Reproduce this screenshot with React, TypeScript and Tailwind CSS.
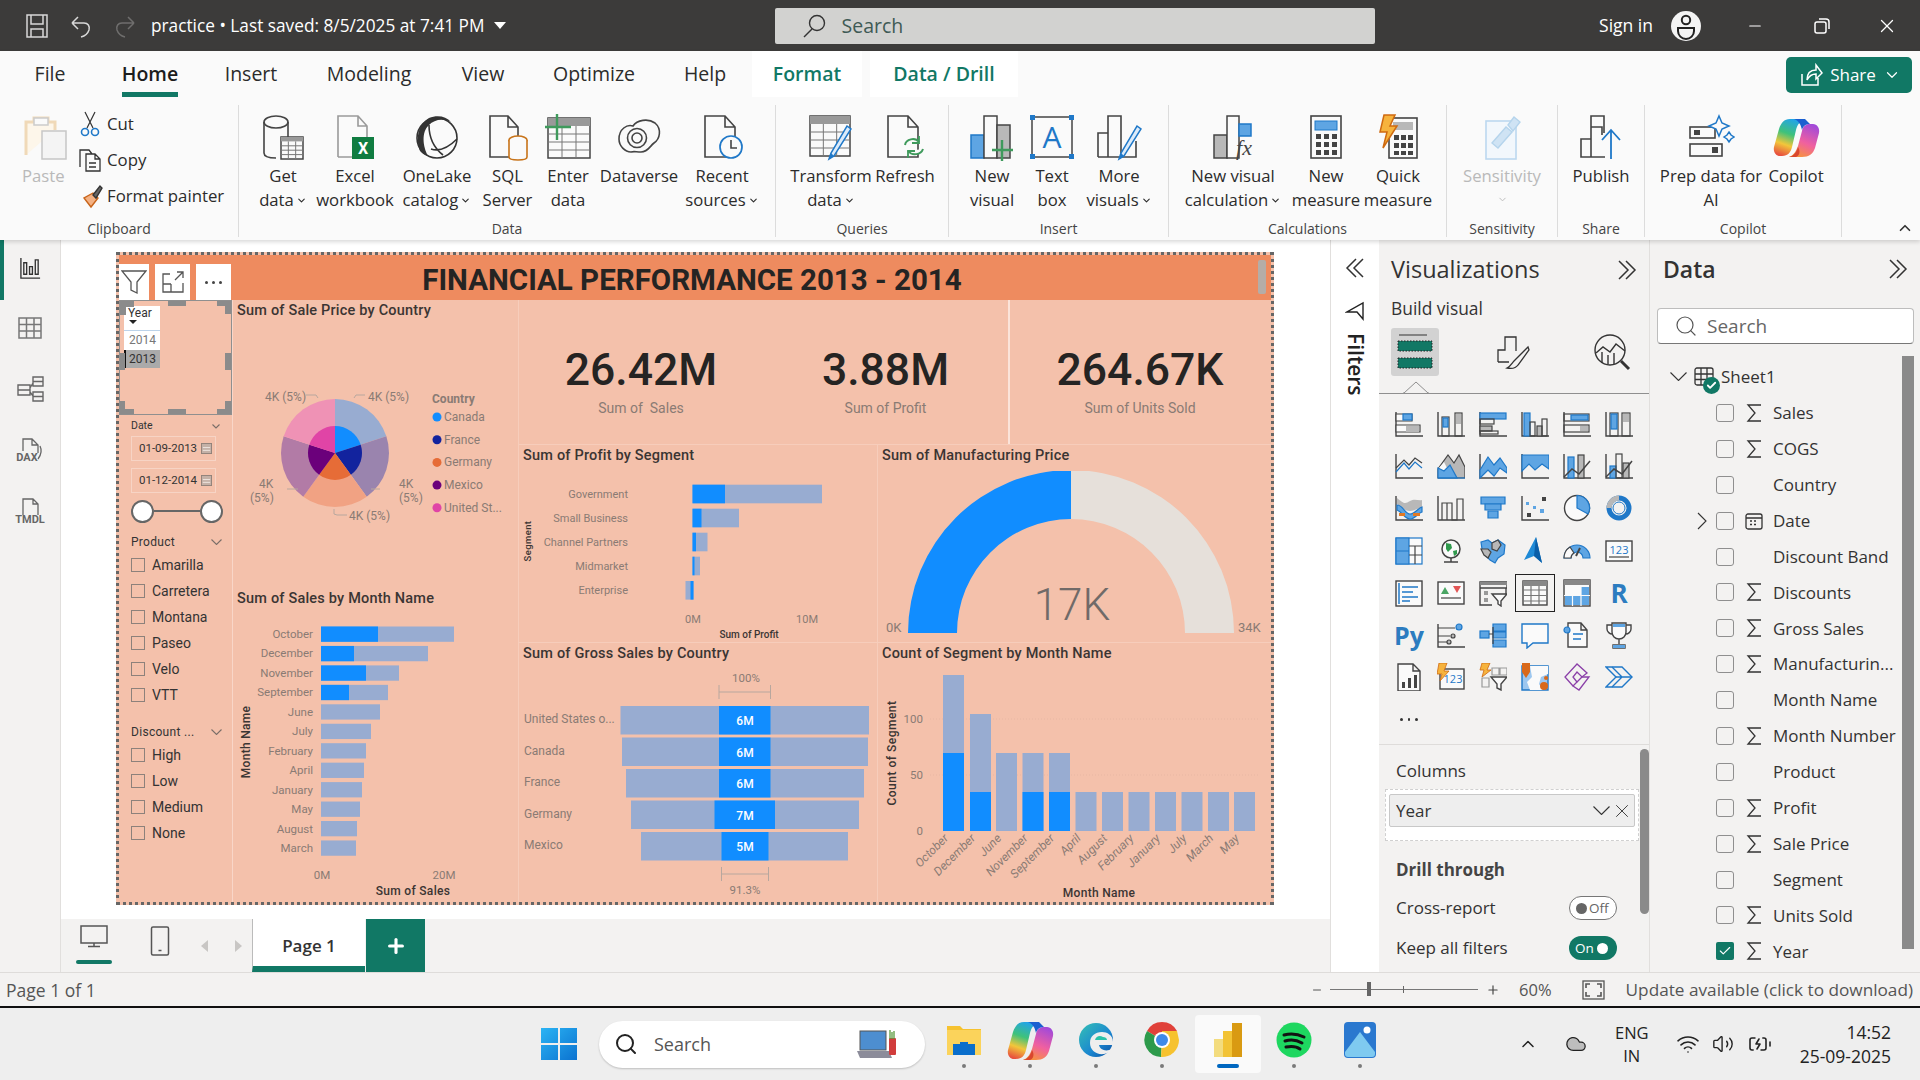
import { ReactNode } from "react";
import { ChevronDown, ChevronUp, Search, X, Minus, Plus, Check, Wifi, Volume2, BatteryCharging, Cloud } from "lucide-react";

const K = "#444444";
const BL = "#5ea5e3";
const BS = "#1f78c8";
const GY = "#b8b8b8";

function Ico({ s = 48, vb = 48, children }: { s?: number; vb?: number; children: ReactNode }) {
  return (
    <svg width={s} height={s} viewBox={`0 0 ${vb} ${vb}`} fill="none" className="shrink-0">
      {children}
    </svg>
  );
}

const Doc = ({ x = 8, w = 28, c = K }: { x?: number; w?: number; c?: string }) => (
  <path d={`M${x} 44V3h${w - 10}l10 11v30z M${x + w - 10} 3v11h10`} stroke={c} strokeWidth="1.6" />
);

const Grid = ({ x, y, w, h, top = "#999" }: { x: number; y: number; w: number; h: number; top?: string }) => (
  <g>
    <rect x={x} y={y} width={w} height={h} fill="#fafafa" stroke={K} strokeWidth="1.5" />
    <rect x={x} y={y} width={w} height={h / 5} fill={top} />
    <path d={`M${x} ${y + (h * 2) / 5}h${w}M${x} ${y + (h * 3) / 5}h${w}M${x} ${y + (h * 4) / 5}h${w}M${x + w / 3} ${y + h / 5}v${(h * 4) / 5}M${x + (w * 2) / 3} ${y + h / 5}v${(h * 4) / 5}`} stroke="#777" strokeWidth="1" />
  </g>
);

const Pencil = ({ dx = 0, dy = 0 }: { dx?: number; dy?: number }) => (
  <g transform={`translate(${dx} ${dy})`}>
    <path d="M14 42l-2 6 5-3 17-27-4-3z" fill="#dcebfa" stroke={BS} strokeWidth="1.5" />
    <path d="M12 48l2-6 3 3z" fill={BS} />
  </g>
);

const Lightning = () => <path d="M10 2h11l-5 11h7L9 35l4-16H6z" fill="#f6b33d" stroke="#cf6a10" strokeWidth="1.5" />;

// wide thin chevron, lucide's are too small at these sizes
function Chev({ w, c = "currentColor" }: { w: number; c?: string }) {
  return (
    <svg width={w} height={w / 2 + 1} viewBox={`0 0 ${w} ${w / 2 + 1}`} fill="none" stroke={c} strokeWidth="1.100" className="shrink-0">
      <path d={`M0.500 0.500L${w / 2} ${w / 2}L${w - 0.5} 0.500`} />
    </svg>
  );
}

function CopilotMark({ id }: { id: string }) {
  return (
    <Ico>
      <defs>
        <linearGradient id={`${id}L`} x1="0.6" y1="0" x2="0.3" y2="1">
          <stop offset="0" stopColor="#22a4e8" />
          <stop offset="0.4" stopColor="#3fc27a" />
          <stop offset="0.7" stopColor="#f2c63a" />
          <stop offset="1" stopColor="#e8523f" />
        </linearGradient>
        <linearGradient id={`${id}R`} x1="0.7" y1="0" x2="0.3" y2="1">
          <stop offset="0" stopColor="#a34ad8" />
          <stop offset="0.55" stopColor="#f060a0" />
          <stop offset="1" stopColor="#f7943c" />
        </linearGradient>
      </defs>
      <path d="M18 6h15c-5 2-8 6-9 11l-4 17c-1 5-4 9-10 9H8c-4 0-7-4-6-9l5-18C9 10 12 6 18 6z" fill={`url(#${id}L)`} />
      <path d="M30 44H17c5-2 7-6 9-11l4-15c1-5 4-7 8-7h3c4 0 7 4 6 9l-4 15c-2 6-6 9-13 9z" fill={`url(#${id}R)`} />
      <path d="M22 6h11l5 5c-4 0-7 2-8 6-1-5-3-9-8-11z" fill="#1a5fd0" />
      <path d="M26 34c-1 4-3 7-6 9l-3 1h7c3-1 5-5 2-10z" fill="#d9472f" />
    </Ico>
  );
}

function RibbonIcon({ name }: { name: string }) {
  switch (name) {
    case "get":
      return (
        <Ico>
          <ellipse cx="17" cy="9" rx="12" ry="6" stroke={K} strokeWidth="1.6" fill="#fafafa" />
          <path d="M5 9v31c0 3 4 5 12 5M29 9v15" stroke={K} strokeWidth="1.6" />
          <Grid x={22} y={24} w={22} h={22} />
        </Ico>
      );
    case "excel":
      return (
        <Ico>
          <path d="M7 44V3h20l9 10v12M27 3v10h9M7 44h14" stroke="#9a9a9a" strokeWidth="1.6" />
          <rect x="21" y="24" width="22" height="22" fill="#107c41" />
          <text x="32" y="41" textAnchor="middle" fontSize="16" fontWeight="700" fill="#fff" fontFamily="Roboto, sans-serif">X</text>
        </Ico>
      );
    case "onelake":
      return (
        <Ico>
          <circle cx="24" cy="25" r="20" stroke="#333" strokeWidth="1.6" fill="#fafafa" />
          <path d="M16 5C6 11 2 24 7 38c2 2 4 4 8 5-5-9-7-24 1-31 5-5 13-7 22-3-5-6-14-7-22-4z" fill="#333" />
          <path d="M16 12c0 12 5 23 14 30M18 36c9 3 18-2 26-10" stroke="#333" strokeWidth="1.6" />
        </Ico>
      );
    case "sql":
      return (
        <Ico>
          <Doc x={6} w={28} />
          <ellipse cx="34" cy="27" rx="9" ry="4" fill="#fafafa" stroke="#c8741a" strokeWidth="1.6" />
          <path d="M25 27v17c0 2 4 3 9 3s9-1 9-3V27" fill="#fafafa" stroke="#c8741a" strokeWidth="1.6" />
        </Ico>
      );
    case "enter":
      return (
        <Ico>
          <Grid x={4} y={5} w={42} h={40} />
          <path d="M13 1v26M1 14h26" stroke="#3f9a5c" strokeWidth="2.4" />
        </Ico>
      );
    case "dataverse":
      return (
        <Ico>
          <path d="M4 26c0-10 8-15 14-13 4-6 15-8 22-3 7 6 5 16-1 20-4 3-6 9-13 9-5 0-7-1-10 0-6 0-12-6-12-13z" stroke={K} strokeWidth="1.6" />
          <circle cx="22" cy="25" r="9.500" stroke={K} strokeWidth="1.6" />
          <circle cx="22" cy="25" r="5" stroke={K} strokeWidth="1.6" />
        </Ico>
      );
    case "recent":
      return (
        <Ico>
          <Doc x={7} w={30} />
          <circle cx="33" cy="34" r="11" fill="#fafafa" stroke={BS} strokeWidth="1.7" />
          <path d="M33 27v8h6" stroke={K} strokeWidth="1.6" />
        </Ico>
      );
    case "transform":
      return (
        <Ico>
          <Grid x={3} y={3} w={40} h={40} />
          <Pencil dx={10} dy={-2} />
        </Ico>
      );
    case "refresh":
      return (
        <Ico>
          <Doc x={7} w={30} />
          <path d="M24 32c1-6 10-8 14-3M42 36c-2 6-11 7-15 2" stroke="#3f9a5c" strokeWidth="2" fill="#fafafa" />
          <path d="M38 23v7h-7M27 45v-7h7" stroke="#3f9a5c" strokeWidth="1.8" />
        </Ico>
      );
    case "newvisual":
      return (
        <Ico>
          <rect x="3" y="22" width="13" height="23" fill={BL} stroke={BS} strokeWidth="1.5" />
          <rect x="16" y="3" width="13" height="42" fill="#fafafa" stroke={K} strokeWidth="1.5" />
          <rect x="29" y="12" width="13" height="33" fill={GY} stroke={K} strokeWidth="1.5" />
          <path d="M34 27v21M24 37h21" stroke="#3f9a5c" strokeWidth="2.4" />
        </Ico>
      );
    case "textbox":
      return (
        <Ico>
          <rect x="4" y="4" width="40" height="40" stroke={K} strokeWidth="1.5" />
          <path d="M2 2h5v5H2zM41 2h5v5h-5zM2 41h5v5H2zM41 41h5v5h-5z" fill={BS} />
          <text x="24" y="35" textAnchor="middle" fontSize="30" fill={BS} fontFamily="Open Sans, sans-serif">A</text>
        </Ico>
      );
    case "more":
      return (
        <Ico>
          <path d="M3 44V20h10M13 44V3h13v41M3 44h38V28" stroke={K} strokeWidth="1.6" />
          <Pencil dx={12} dy={-2} />
        </Ico>
      );
    case "calc":
      return (
        <Ico>
          <rect x="5" y="22" width="13" height="23" fill={GY} stroke={K} strokeWidth="1.5" />
          <rect x="18" y="3" width="12" height="42" fill="#fafafa" stroke={K} strokeWidth="1.5" />
          <rect x="30" y="11" width="12" height="12" fill={BL} stroke={BS} strokeWidth="1.5" />
          <text x="35" y="42" textAnchor="middle" fontSize="22" fontStyle="italic" fill={K} fontFamily="Liberation Serif, serif">fx</text>
        </Ico>
      );
    case "measure":
      return (
        <Ico>
          <rect x="9" y="3" width="30" height="42" fill="#fafafa" stroke={K} strokeWidth="1.6" />
          <rect x="13" y="8" width="22" height="9" fill={BL} stroke={BS} />
          <path d="M14 21h5v5h-5zM22 21h5v5h-5zM30 21h5v5h-5zM14 29h5v5h-5zM22 29h5v5h-5zM30 29h5v5h-5zM14 37h5v5h-5zM22 37h5v5h-5zM30 37h5v5h-5z" fill={K} />
        </Ico>
      );
    case "quick":
      return (
        <Ico>
          <rect x="15" y="5" width="28" height="40" fill="#fafafa" stroke={K} strokeWidth="1.6" />
          <rect x="19" y="9" width="20" height="8" fill={GY} />
          <path d="M20 22h5v5h-5zM27 22h5v5h-5zM34 22h5v5h-5zM20 30h5v5h-5zM27 30h5v5h-5zM34 30h5v5h-5zM20 38h5v4h-5zM27 38h5v4h-5zM34 38h5v4h-5z" fill={K} />
          <Lightning />
        </Ico>
      );
    case "sensitivity":
      return (
        <Ico>
          <rect x="8" y="8" width="30" height="38" fill="#f2f7fc" stroke="#bcd8ef" strokeWidth="1.6" />
          <path d="M14 30L28 14l6 5-14 16zM30 12l6-8 6 5-7 9z" fill="#cfe3f4" stroke="#b5d4ec" strokeWidth="1.4" />
        </Ico>
      );
    case "publish":
      return (
        <Ico>
          <path d="M4 44V26h10v18zM14 44V14h11v8M14 14V3h13v17M4 44h24" stroke={K} strokeWidth="1.6" />
          <path d="M34 46V18M25 27l9-10 9 10" stroke={BS} strokeWidth="1.8" />
        </Ico>
      );
    case "prep":
      return (
        <Ico>
          <rect x="3" y="14" width="25" height="11" stroke={K} strokeWidth="1.6" fill="#fafafa" />
          <rect x="7" y="17" width="6" height="5" fill={K} />
          <rect x="3" y="31" width="32" height="12" stroke={K} strokeWidth="1.6" fill="#fafafa" />
          <rect x="25" y="34" width="6" height="6" fill={K} />
          <path d="M32 3l3 7 7 3-7 3-3 7-3-7-7-3 7-3zM42 19l2 3 3 2-3 2-2 3-2-3-3-2 3-2z" fill="#fafafa" stroke={BS} strokeWidth="1.5" />
        </Ico>
      );
    case "copilot":
      return <CopilotMark id="cpR" />;
    case "paste":
      return (
        <Ico vb={48}>
          <path d="M4 42V9h8V5h14v4h7v8" stroke="#f0d9b8" strokeWidth="3" fill="#fdf6ea" />
          <path d="M12 5h14v7H12z" fill="#fafafa" stroke="#ccc" strokeWidth="1.5" />
          <rect x="20" y="18" width="24" height="28" fill="#f4f4f4" stroke="#c6c6c6" strokeWidth="1.5" />
        </Ico>
      );
  }
  return null;
}

function Big({ w, icon, lines, arrow, faded }: { w: number; icon: string; lines: string[]; arrow?: boolean; faded?: boolean }) {
  return (
    <div style={{ width: w }} className={`flex flex-col items-center pt-[8px] text-[16.7px] leading-[24px] ${faded ? "text-[#b9b9b9]" : "text-[#2b2b2b]"}`}>
      <div className="mb-[3px] flex h-[48px] items-center">
        <RibbonIcon name={icon} />
      </div>
      {lines.map((l, i) => (
        <span key={l} className="flex items-center whitespace-nowrap">
          {l}
          {arrow && i === lines.length - 1 && <ChevronDown size={11} strokeWidth={2.4} className="ml-[2px]" />}
        </span>
      ))}
      {faded && <ChevronDown size={11} strokeWidth={2} className="mt-[6px] text-[#b9b9b9]" />}
    </div>
  );
}

function Group({ w, label, className = "", children }: { w: number; label: string; className?: string; children: ReactNode }) {
  return (
    <div style={{ width: w }} className="flex h-[132px] flex-col border-r border-[#dcdcdc]">
      <div className={`flex h-[115px] shrink-0 ${className}`}>{children}</div>
      <div className="text-center text-[14px] leading-[17px] text-[#444]">{label}</div>
    </div>
  );
}

function DoubleChevron({ left }: { left?: boolean }) {
  return (
    <svg width="20" height="20" viewBox="0 0 20 20" fill="none" stroke="#333" strokeWidth="1.500" className={left ? "rotate-180" : ""}>
      <path d="M2 1l9 9-9 9M9 1l9 9-9 9" />
    </svg>
  );
}

function TitleBar() {
  return (
    <div className="flex h-[51px] items-center bg-[#3c3b3a] text-white">
      <svg width="24" height="26" viewBox="0 0 24 26" fill="none" className="ml-[25px]" stroke="#d8d8d8" strokeWidth="1.5">
        <path d="M2 2h20v22H2zM6 2v9h12V2M6 24v-8h12v8" />
      </svg>
      <svg width="22" height="24" viewBox="0 0 22 24" fill="none" className="ml-[21px]" stroke="#d8d8d8" strokeWidth="1.5">
        <path d="M2 9h12c4 0 6 3 5 7-1 3-4 6-8 7M2 9l6-6M2 9l6 6" />
      </svg>
      <svg width="22" height="24" viewBox="0 0 22 24" fill="none" className="ml-[22px]" stroke="#6f6e6d" strokeWidth="1.5">
        <path d="M20 9H8c-4 0-6 3-5 7 1 3 4 6 8 7M20 9l-6-6M20 9l-6 6" />
      </svg>
      <span className="ml-[15px] whitespace-nowrap text-[17.25px]">practice • Last saved: 8/5/2025 at 7:41 PM</span>
      <span className="ml-[9px] h-0 w-0 border-x-[6px] border-t-[7px] border-x-transparent border-t-white" />
      <div className="ml-[269px] flex h-[36px] w-[600px] items-center rounded-[2px] bg-[#d2d2d0] pl-[26px] text-[#3f5a55]">
        <svg width="26" height="26" viewBox="0 0 26 26" fill="none" stroke="#333" strokeWidth="1.4">
          <circle cx="16" cy="10" r="7.5" />
          <path d="M11 16L3 24" />
        </svg>
        <span className="ml-[15px] text-[19.5px]">Search</span>
      </div>
      <span className="ml-auto text-[17.5px]">Sign in</span>
      <svg width="32" height="32" viewBox="0 0 32 32" className="ml-[17px]">
        <circle cx="16" cy="16" r="15" fill="#f4f4f4" />
        <circle cx="16" cy="10" r="4.2" fill="none" stroke="#222" strokeWidth="2" />
        <path d="M8 18h16v3a8 8 0 0 1-16 0z" fill="none" stroke="#222" strokeWidth="2" />
      </svg>
      <Minus size={18} strokeWidth={1.5} className="ml-[44px]" />
      <svg width="18" height="18" viewBox="0 0 18 18" fill="none" stroke="#fff" strokeWidth="1.5" className="ml-[49px]">
        <rect x="2" y="5" width="11" height="11" rx="2" />
        <path d="M6 2h7a3 3 0 0 1 3 3v7" />
      </svg>
      <X size={22} strokeWidth={1.4} className="ml-[45px] mr-[22px]" />
    </div>
  );
}

function Ribbon() {
  const tabs: [string, number][] = [
    ["File", 100],
    ["Home", 100],
    ["Insert", 102],
    ["Modeling", 134],
    ["View", 94],
    ["Optimize", 128],
    ["Help", 94],
  ];
  return (
    <div className="relative z-10 h-[189px] bg-[#fafafa] shadow-[0_2px_4px_rgba(0,0,0,0.15)]">
      <div className="flex h-[54px] items-stretch text-[19.5px] text-[#2b2b2b]">
        {tabs.map(([t, w]) => (
          <div key={t} style={{ width: w }} className="flex h-[46px] items-center justify-center">
            <span className={t === "Home" ? "relative font-semibold text-[#1c1c1c]" : ""}>
              {t}
              {t === "Home" && <span className="absolute inset-x-0 -bottom-[8px] h-[5px] bg-[#117865]" />}
            </span>
          </div>
        ))}
        <div className="flex h-[46px] w-[110px] items-center justify-center bg-white font-semibold text-[#117865]">Format</div>
        <div className="ml-[8px] flex h-[46px] w-[148px] items-center justify-center bg-white font-semibold text-[#117865]">Data / Drill</div>
        <div className="ml-auto mr-[8px] mt-[6px] flex h-[36px] w-[126px] items-center justify-center gap-[7px] rounded-[5px] bg-[#117865] pl-[2px] text-[17px] text-white">
          <svg width="24" height="24" viewBox="0 0 24 24" fill="none" stroke="#fff" strokeWidth="1.5">
            <path d="M3 11v11h16v-7M8 17c0-7 4-10 9-10V2l6 8-6 6v-5c-4 0-7 2-9 6z" />
          </svg>
          Share
          <ChevronDown size={18} strokeWidth={1.6} />
        </div>
      </div>
      <div className="flex">
        <Group w={239} label="Clipboard">
          <div className="w-[77px] pl-[22px] pt-[8px] text-[#b9b9b9]">
            <div className="h-[48px]">
              <RibbonIcon name="paste" />
            </div>
            <div className="mt-[3px] text-[16.7px] leading-[24px]">Paste</div>
          </div>
          <div className="flex flex-col gap-[10px] pt-[6px] text-[16.800px] leading-[26px] text-[#2b2b2b]">
            <div className="flex items-center">
              <span className="flex w-[30px] justify-center pr-[4px]">
                <svg width="20" height="26" viewBox="0 0 20 26" fill="none" stroke="#333" strokeWidth="1.2">
                  <path d="M5 1l8 16M15 1L7 17" />
                  <circle cx="5" cy="21" r="3.5" stroke={BS} strokeWidth="1.6" />
                  <circle cx="15" cy="21" r="3.5" stroke={BS} strokeWidth="1.6" />
                </svg>
              </span>
              Cut
            </div>
            <div className="flex items-center">
              <span className="flex w-[30px] justify-center pr-[4px]">
                <svg width="24" height="26" viewBox="0 0 24 26" fill="none" stroke="#333" strokeWidth="1.3">
                  <path d="M2 20V3h9l3 4M8 24V7h9l5 5v12zM17 7v5h5M11 16h7M11 20h7" />
                </svg>
              </span>
              Copy
            </div>
            <div className="flex items-center">
              <span className="flex w-[30px] justify-center pr-[3px]">
                <svg width="26" height="26" viewBox="0 0 26 26" fill="none" strokeWidth="1.4">
                  <path d="M15 10l-9 5 7 9 7-9z" fill="#f4b183" stroke="#c8641a" />
                  <path d="M15 12l7-9 2 2-6 10z" fill="#666" stroke="#333" />
                </svg>
              </span>
              Format painter
            </div>
          </div>
        </Group>
        <Group w={537} label="Data" className="pl-[11px]">
          <Big w={66} icon="get" lines={["Get", "data"]} arrow />
          <Big w={78} icon="excel" lines={["Excel", "workbook"]} />
          <Big w={86} icon="onelake" lines={["OneLake", "catalog"]} arrow />
          <Big w={55} icon="sql" lines={["SQL", "Server"]} />
          <Big w={66} icon="enter" lines={["Enter", "data"]} />
          <Big w={76} icon="dataverse" lines={["Dataverse"]} />
          <Big w={90} icon="recent" lines={["Recent", "sources"]} arrow />
        </Group>
        <Group w={173} label="Queries" className="pl-[9px]">
          <Big w={92} icon="transform" lines={["Transform", "data"]} arrow />
          <Big w={56} icon="refresh" lines={["Refresh"]} />
        </Group>
        <Group w={220} label="Insert" className="pl-[13px]">
          <Big w={60} icon="newvisual" lines={["New", "visual"]} />
          <Big w={60} icon="textbox" lines={["Text", "box"]} />
          <Big w={74} icon="more" lines={["More", "visuals"]} arrow />
        </Group>
        <Group w={278} label="Calculations" className="pl-[6px]">
          <Big w={116} icon="calc" lines={["New visual", "calculation"]} arrow />
          <Big w={70} icon="measure" lines={["New", "measure"]} />
          <Big w={74} icon="quick" lines={["Quick", "measure"]} />
        </Group>
        <Group w={111} label="Sensitivity">
          <Big w={110} icon="sensitivity" lines={["Sensitivity"]} faded />
        </Group>
        <Group w={87} label="Share">
          <Big w={86} icon="publish" lines={["Publish"]} />
        </Group>
        <Group w={197} label="Copilot">
          <Big w={132} icon="prep" lines={["Prep data for", "AI"]} />
          <Big w={38} icon="copilot" lines={["Copilot"]} />
        </Group>
        <div className="ml-auto flex h-[132px] items-end pr-[6px]">
          <ChevronUp size={18} strokeWidth={2.2} className="text-[#333]" />
        </div>
      </div>
    </div>
  );
}

function LeftRail() {
  return (
    <div className="flex w-[61px] shrink-0 flex-col items-center border-r border-[#e1dfdd] bg-[#f3f2f1] pt-[17px]">
      <div className="absolute left-0 top-[240px] h-[60px] w-[4px] bg-[#117865]" />
      <svg width="23" height="23" viewBox="0 0 24 24" fill="none" stroke="#333" strokeWidth="1.4">
        <path d="M2 1v21h20M5 18V6h3v12zM11 18v-8h3v8zM17 18V3h3v15z" />
      </svg>
      <svg width="26" height="24" viewBox="0 0 26 24" fill="none" stroke="#777" strokeWidth="1.5" className="mt-[36px]">
        <path d="M2 2h22v20H2zM2 8.5h22M2 15h22M9.5 2v20M17 2v20" />
      </svg>
      <svg width="28" height="28" viewBox="0 0 28 28" fill="none" stroke="#666" strokeWidth="1.4" className="mt-[35px]">
        <path d="M2 10h12v10H2zM2 15h12M17 2h10v9H17zM17 6.500h10M17 17h10v9H17zM17 21.500h10M14 13l3-5M14 17l3 4" />
      </svg>
      <div className="mt-[34px] flex flex-col items-center">
        <svg width="28" height="24" viewBox="0 0 28 24" fill="none" stroke="#666" strokeWidth="1.3">
          <path d="M7 14V2h9l6 6v8M16 2v6h6M24 9c2 4 1 9-2 13" />
        </svg>
        <span className="-mt-[9px] -ml-[6px] font-['Roboto',sans-serif] text-[11px] font-bold leading-[11px] text-[#666]">DAX</span>
      </div>
      <div className="mt-[34px] flex flex-col items-center">
        <svg width="24" height="19" viewBox="0 0 24 19" fill="none" stroke="#666" strokeWidth="1.3">
          <path d="M5 18V2h10l5 5v11M15 2v5h5" />
        </svg>
        <span className="-mt-[2px] font-['Roboto',sans-serif] text-[11px] font-bold leading-[11px] text-[#666]">TMDL</span>
      </div>
    </div>
  );
}

function CheckRow({ label }: { label: string }) {
  return (
    <div className="flex h-[26px] items-center gap-[7px] text-[14px] text-[#333]">
      <span className="h-[14px] w-[14px] border border-[#8d817b]" />
      {label}
    </div>
  );
}

function DateInput({ value }: { value: string }) {
  return (
    <div className="flex h-[25px] w-[85px] items-center justify-between border border-[#f7d4c5] pl-[7px] pr-[3px] text-[11.500px] text-[#333]">
      {value}
      <svg width="11" height="11" viewBox="0 0 12 12">
        <rect x="0.500" y="0.500" width="11" height="11" fill="#c4b1a7" stroke="#8e8078" />
        <path d="M2 5h8M2 8h8" stroke="#f2e9e5" />
      </svg>
    </div>
  );
}

function Slicers() {
  const handles = [
    "left-0 top-0 h-[6px] w-[14px]", "left-0 top-0 h-[14px] w-[6px]", "left-[48px] top-0 h-[5px] w-[18px]", "right-0 top-0 h-[5px] w-[14px]", "right-0 top-0 h-[13px] w-[6px]",
    "left-0 top-[52px] h-[17px] w-[5px]", "right-0 top-[52px] h-[17px] w-[6px]",
    "left-0 bottom-0 h-[5px] w-[14px]", "left-0 bottom-0 h-[13px] w-[5px]", "left-[48px] bottom-0 h-[5px] w-[18px]", "right-0 bottom-0 h-[5px] w-[14px]", "right-0 bottom-0 h-[13px] w-[6px]",
  ];
  return (
    <div className="w-[114px] shrink-0 border-r border-[#f9d6c8]">
      <div className="relative h-[115px] border border-[#8f8f8f] pl-[4px] pt-[5px]">
        {handles.map((h) => (
          <span key={h} className={`absolute bg-[#8b8b8b] ${h}`} />
        ))}
        <div className="w-[36px] text-[12px] text-[#333]">
          <div className="h-[25px] border-b border-[#bcd3ea] bg-white pl-[4px] leading-[14px]">
            Year
            <span className="ml-[1px] block h-0 w-0 border-x-[4px] border-t-[4px] border-x-transparent border-t-[#222]" />
          </div>
          <div className="h-[19px] bg-white pl-[5px] leading-[19px] text-[#777]">2014</div>
          <div className="h-[18px] border-l-2 border-[#111] bg-[#aaaaaa] pl-[3px] leading-[18px]">2013</div>
        </div>
      </div>
      <div className="pl-[12px]">
        <div className="flex h-[20px] items-center justify-between pr-[12px] pt-[2px] text-[10.5px] text-[#333]">
          Date
          <Chev w={8} c="#7a6e68" />
        </div>
        <div className="mt-[1px] flex flex-col gap-[7px]">
          <DateInput value="01-09-2013" />
          <DateInput value="01-12-2014" />
        </div>
        <div className="mt-[6px] flex h-[24px] w-[92px] items-center">
          <span className="h-[23px] w-[23px] shrink-0 rounded-full border-[2px] border-[#666] bg-white" />
          <span className="h-[2px] flex-1 bg-[#666]" />
          <span className="h-[23px] w-[23px] shrink-0 rounded-full border-[2px] border-[#666] bg-white" />
        </div>
        <div className="mt-[9px] flex h-[20px] items-center justify-between pr-[10px] text-[12px] tracking-[0.3px] text-[#333]">
          Product
          <Chev w={11} c="#7a6e68" />
        </div>
        {["Amarilla", "Carretera", "Montana", "Paseo", "Velo", "VTT"].map((p) => (
          <CheckRow key={p} label={p} />
        ))}
        <div className="mt-[14px] flex h-[20px] items-center justify-between pr-[10px] text-[12px] tracking-[0.3px] text-[#333]">
          Discount ...
          <Chev w={11} c="#7a6e68" />
        </div>
        {["High", "Low", "Medium", "None"].map((p) => (
          <CheckRow key={p} label={p} />
        ))}
      </div>
    </div>
  );
}

const TX = "#8a7b74";
const TD = "#3b3533";
const LIGHT = "#98acd1";
const BLUE = "#118dff";

function polar(cx: number, cy: number, r: number, deg: number) {
  const a = ((deg - 90) * Math.PI) / 180;
  return [cx + r * Math.cos(a), cy + r * Math.sin(a)];
}

function wedge(cx: number, cy: number, r: number, a: number, b: number) {
  const [x1, y1] = polar(cx, cy, r, a);
  const [x2, y2] = polar(cx, cy, r, b);
  return `M${cx} ${cy}L${x1} ${y1}A${r} ${r} 0 0 1 ${x2} ${y2}z`;
}

function PieChart() {
  const outer = ["#98acd1", "#9a84ae", "#f1a283", "#b27ba6", "#ef92b5"];
  const inner = ["#118dff", "#12239e", "#e66c37", "#6b007b", "#e044a6"];
  const legend: [string, string][] = [["Canada", "#118dff"], ["France", "#12239e"], ["Germany", "#e66c37"], ["Mexico", "#6b007b"], ["United St...", "#e044a6"]];
  return (
    <svg width="285" height="262" viewBox="233 327 285 262" className="block">
      {outer.map((c, i) => (
        <path key={c} d={wedge(335, 454, 54, i * 72, i * 72 + 72)} fill={c} />
      ))}
      {inner.map((c, i) => (
        <path key={c} d={wedge(335, 454, 27, i * 72, i * 72 + 72)} fill={c} />
      ))}
      <g fontSize="12" fill={TX}>
        <text x="265" y="402">4K (5%)</text>
        <text x="368" y="402">4K (5%)</text>
        <text x="259" y="489">4K</text>
        <text x="250" y="503">(5%)</text>
        <text x="399" y="489">4K</text>
        <text x="399" y="503">(5%)</text>
        <text x="349" y="521">4K (5%)</text>
      </g>
      <path d="M306 396h10l2 3M365 396h-9l-2 3M298 490h-11M380 490h-9M334 510v5l3 1h10" stroke="#b8a79e" fill="none" />
      <text x="432" y="404" fontSize="12" fontWeight="700" fill={TX}>Country</text>
      {legend.map(([l, c], i) => (
        <g key={l}>
          <circle cx="437" cy={418 + i * 22.700} r="4.500" fill={c} />
          <text x="444" y={422 + i * 22.700} fontSize="12" fill={TX}>{l}</text>
        </g>
      ))}
    </svg>
  );
}

function SalesChart() {
  const rows: [string, number, number | null][] = [
    ["October", 454, 378], ["December", 428, 354], ["November", 399, 366], ["September", 388, 349], ["June", 380, null], ["July", 371, null],
    ["February", 366, null], ["April", 364, null], ["January", 362, null], ["May", 360, null], ["August", 357, null], ["March", 356, null],
  ];
  return (
    <svg width="285" height="287" viewBox="233 615 285 287" className="block">
      {rows.map(([m, l, d], i) => {
        const y = 635 + i * 19.450;
        return (
          <g key={m}>
            <text x="313" y={y + 4} textAnchor="end" fontSize="11.500" fill={TX}>{m}</text>
            <rect x="321" y={y - 7.500} width={l - 321} height="15.300" fill={LIGHT} />
            {d && <rect x="321" y={y - 7.500} width={d - 321} height="15.300" fill={BLUE} />}
          </g>
        );
      })}
      <text x="322" y="880" textAnchor="middle" fontSize="11.500" fill={TX}>0M</text>
      <text x="444" y="880" textAnchor="middle" fontSize="11.500" fill={TX}>20M</text>
      <text x="413" y="896" textAnchor="middle" fontSize="12" fontWeight="500" letterSpacing="0.3" fill={TD}>Sum of Sales</text>
      <text transform="translate(250 743) rotate(-90)" textAnchor="middle" fontSize="12" fontWeight="500" letterSpacing="0.3" fill={TD}>Month Name</text>
    </svg>
  );
}

function ProfitChart() {
  const rows: [string, number, number][] = [
    ["Government", 822, 725], ["Small Business", 739, 701.500], ["Channel Partners", 707.500, 696], ["Midmarket", 700, 694.500],
  ];
  return (
    <svg width="359" height="172" viewBox="519 471 359 172" className="block">
      {rows.map(([s, l, d], i) => {
        const y = 494 + i * 24;
        return (
          <g key={s}>
            <text x="628" y={y + 4} textAnchor="end" fontSize="11" fill={TX}>{s}</text>
            <rect x="692.500" y={y - 9.300} width={l - 692.500} height="18.600" fill={LIGHT} />
            <rect x="692.500" y={y - 9.300} width={d - 692.500} height="18.600" fill={BLUE} />
          </g>
        );
      })}
      <text x="628" y="594" textAnchor="end" fontSize="11" fill={TX}>Enterprise</text>
      <rect x="685.500" y="581" width="8" height="18.600" fill={LIGHT} />
      <rect x="690.500" y="581" width="3" height="18.600" fill={BLUE} />
      <text x="693" y="623" textAnchor="middle" fontSize="11" fill={TX}>0M</text>
      <text x="807" y="623" textAnchor="middle" fontSize="11" fill={TX}>10M</text>
      <text x="749" y="638" textAnchor="middle" fontSize="10" fontWeight="500" fill={TD}>Sum of Profit</text>
      <text transform="translate(531 541) rotate(-90)" textAnchor="middle" fontSize="9.500" fontWeight="500" letterSpacing="0.4" fill={TD}>Segment</text>
    </svg>
  );
}

function GaugeChart() {
  return (
    <svg width="393" height="172" viewBox="878 471 393 172" className="block">
      <path d="M908 633A163 163 0 0 1 1071 470V519A114 114 0 0 0 957 633z" fill={BLUE} />
      <path d="M1071 470A163 163 0 0 1 1234 633H1185A114 114 0 0 0 1071 519z" fill="#e6e0da" />
      <text x="1072" y="620" textAnchor="middle" fontSize="44" fontWeight="300" fill="#706a68">17K</text>
      <text x="886" y="632" fontSize="13" fill={TX}>0K</text>
      <text x="1238" y="632" fontSize="13" fill={TX}>34K</text>
    </svg>
  );
}

function FunnelChart() {
  const rows: [string, number, number, number, number, string][] = [
    ["United States o...", 620.500, 869, 719, 770.500, "6M"],
    ["Canada", 622, 868, 719, 770.500, "6M"],
    ["France", 626, 864, 719, 770.500, "6M"],
    ["Germany", 631, 859, 714.500, 775, "7M"],
    ["Mexico", 641, 848, 721.500, 768.500, "5M"],
  ];
  return (
    <svg width="359" height="234" viewBox="519 668 359 234" className="block">
      <text x="746" y="681" textAnchor="middle" fontSize="11.500" fill={TX}>100%</text>
      <path d="M719 684v14M770.500 684v14M719 691h51.500" stroke="#b8a79e" />
      {rows.map(([c, a, b, d, e, v], i) => {
        const y = 705 + i * 31.500;
        return (
          <g key={c}>
            <text x="524" y={y + 17} fontSize="12" fill={TX}>{c}</text>
            <rect x={a} y={y} width={b - a} height="28.500" fill={LIGHT} />
            <rect x={d} y={y} width={e - d} height="28.500" fill={BLUE} />
            <text x="745" y={y + 19} textAnchor="middle" fontSize="12" fontWeight="500" fill="#fff">{v}</text>
          </g>
        );
      })}
      <path d="M721.500 866v14M768.500 866v14M721.500 873h47" stroke="#b8a79e" />
      <text x="745" y="893" textAnchor="middle" fontSize="11.500" fill={TX}>91.3%</text>
    </svg>
  );
}

function CountChart() {
  const bars: [string, number, number, number | null][] = [
    ["October", 943, 674, 752], ["December", 970, 713, 791], ["June", 996, 752, null], ["November", 1022.500, 752, 791], ["September", 1049, 752, 791],
    ["April", 1075.500, 791, null], ["August", 1102, 791, null], ["February", 1128.500, 791, null], ["January", 1155, 791, null], ["July", 1181.500, 791, null], ["March", 1208, 791, null], ["May", 1234, 791, null],
  ];
  return (
    <svg width="393" height="234" viewBox="878 668 393 234" className="block">
      <path d="M930 718H1260M930 774H1260" stroke="#e8b7a3" strokeDasharray="1 2" />
      {bars.map(([m, x, t, d]) => (
        <g key={m}>
          <rect x={x} y={t} width="21" height={830 - t} fill={LIGHT} />
          {d && <rect x={x} y={d} width="21" height={830 - d} fill={BLUE} />}
          <text transform={`translate(${x + 6} 838) rotate(-45)`} textAnchor="end" fontSize="12" fontStyle="italic" fill={TX}>{m}</text>
        </g>
      ))}
      <text x="923" y="722" textAnchor="end" fontSize="11.500" fill={TX}>100</text>
      <text x="923" y="778" textAnchor="end" fontSize="11.500" fill={TX}>50</text>
      <text x="923" y="834" textAnchor="end" fontSize="11.500" fill={TX}>0</text>
      <text transform="translate(896 752) rotate(-90)" textAnchor="middle" fontSize="12" fontWeight="500" letterSpacing="0.5" fill={TD}>Count of Segment</text>
      <text x="1099" y="896" textAnchor="middle" fontSize="12" fontWeight="500" letterSpacing="0.3" fill={TD}>Month Name</text>
    </svg>
  );
}

function ChartTitle({ children }: { children: ReactNode }) {
  return <div className="h-[26px] pl-[4px] text-[14.500px] font-medium leading-[22px] tracking-[0.2px] text-[#3b3533]">{children}</div>;
}

function Kpi({ w, value, label }: { w: number; value: string; label: string }) {
  return (
    <div style={{ width: w }} className="flex flex-col items-center pt-[45px]">
      <div className="text-[44.500px] font-medium leading-[50px] text-[#252423]">{value}</div>
      <div className="mt-[3px] whitespace-pre text-[14px] text-[#8a7b74]">{label}</div>
    </div>
  );
}

function Report() {
  return (
    <div className="h-[653px] w-[1158px] border-[3px] border-dotted border-[#666] bg-[#f4c1ab] font-['Roboto',sans-serif]">
      <div className="relative flex h-[45px] items-center justify-center bg-[#ee8b5f] pr-[6px] pt-[6px] text-[29.500px] font-bold text-[#252423]">
        FINANCIAL PERFORMANCE 2013 - 2014
        <div className="absolute left-0 top-[9px] flex gap-[6px]">
          <div className="flex h-[36px] w-[30px] items-center justify-center bg-white">
            <svg width="26" height="26" viewBox="0 0 26 26" fill="none" stroke="#555" strokeWidth="1.3">
              <path d="M1 2h24l-9 11v11l-6-3v-8z" />
            </svg>
          </div>
          <div className="flex h-[36px] w-[35px] items-center justify-center bg-white">
            <svg width="22" height="22" viewBox="0 0 22 22" fill="none" stroke="#555" strokeWidth="1.3">
              <path d="M8 3H1v18h20v-9M9 13H1M9 13v8M13 9l8-8M15 1h6v6" />
            </svg>
          </div>
          <div className="flex h-[36px] w-[35px] items-center justify-center gap-[4px] bg-white">
            <span className="h-[3px] w-[3px] rounded-full bg-[#444]" />
            <span className="h-[3px] w-[3px] rounded-full bg-[#444]" />
            <span className="h-[3px] w-[3px] rounded-full bg-[#444]" />
          </div>
        </div>
        <span className="absolute right-[5px] top-[5px] h-[34px] w-[8px] rounded-[2px] bg-[#b5ada7]" />
      </div>
      <div className="flex h-[602px]">
        <Slicers />
        <div className="w-[286px] shrink-0 border-r border-[#f7cdbb]">
          <ChartTitle>Sum of Sale Price by Country</ChartTitle>
          <PieChart />
          <ChartTitle>Sum of Sales by Month Name</ChartTitle>
          <SalesChart />
        </div>
        <div className="flex-1">
          <div className="flex h-[145px] border-b border-[#f7cdbb]">
            <Kpi w={244} value="26.42M" label="Sum of  Sales" />
            <Kpi w={245} value="3.88M" label="Sum of Profit" />
            <div className="w-[2px] bg-[#fbe4da]" />
            <Kpi w={260} value="264.67K" label="Sum of Units Sold" />
          </div>
          <div className="flex h-[198px] border-b border-[#f7cdbb]">
            <div className="w-[359px] border-r border-[#f7cdbb]">
              <ChartTitle>Sum of Profit by Segment</ChartTitle>
              <ProfitChart />
            </div>
            <div className="flex-1">
              <ChartTitle>Sum of Manufacturing Price</ChartTitle>
              <GaugeChart />
            </div>
          </div>
          <div className="flex h-[259px]">
            <div className="w-[359px] border-r border-[#f7cdbb]">
              <ChartTitle>Sum of Gross Sales by Country</ChartTitle>
              <FunnelChart />
            </div>
            <div className="flex-1">
              <ChartTitle>Count of Segment by Month Name</ChartTitle>
              <CountChart />
            </div>
          </div>
        </div>
      </div>
    </div>
  );
}

function PageTabs() {
  return (
    <div className="flex h-[53px] items-stretch bg-[#f3f2f1]">
      <div className="relative flex w-[64px] justify-center pl-[2px] pt-[5px]">
        <svg width="30" height="24" viewBox="0 0 30 24" fill="none" stroke="#555" strokeWidth="1.5">
          <path d="M2 2h26v17H2zM15 19v3M9 22.500h12" />
        </svg>
        <span className="absolute bottom-[8px] left-[15px] h-[4px] w-[36px] rounded-full bg-[#117865]" />
      </div>
      <div className="ml-[16px] flex w-[38px] justify-center pt-[6px]">
        <svg width="20" height="32" viewBox="0 0 20 32" fill="none" stroke="#555" strokeWidth="1.5">
          <rect x="1.500" y="2" width="17" height="28" rx="1.500" />
          <path d="M8.500 25.500h3" />
        </svg>
      </div>
      <div className="flex w-[73px] items-center justify-between pl-[22px] pr-[10px]">
        <span className="h-0 w-0 border-y-[6px] border-r-[7px] border-y-transparent border-r-[#c8c6c4]" />
        <span className="h-0 w-0 border-y-[6px] border-l-[7px] border-y-transparent border-l-[#c8c6c4]" />
      </div>
      <div className="flex w-[113px] items-center justify-center border-b-[6px] border-l border-b-[#117865] border-l-[#bbb] bg-white pt-[6px] text-[17px] font-semibold text-[#333]">Page 1</div>
      <div className="ml-[1px] flex w-[59px] items-center justify-center bg-[#117865]">
        <Plus size={22} strokeWidth={3.4} className="text-white" />
      </div>
    </div>
  );
}

function V({ children }: { children: ReactNode }) {
  return (
    <svg width="28" height="28" viewBox="0 0 28 28" fill="none" strokeWidth="1.2">
      {children}
    </svg>
  );
}

const Ax = () => <path d="M1 2v24h27" stroke={K} strokeWidth="1.4" />;

const vizIcons: ReactNode[] = [
  <V key="a1"><Ax /><path d="M1 4h16v7H1zM1 15h24v7H1z" fill="#fafafa" stroke={K} /><rect x="8" y="4" width="9" height="6" fill={BL} stroke={BS} /><rect x="11" y="16" width="13" height="6" fill={GY} /></V>,
  <V key="a2"><Ax /><rect x="5" y="7" width="7" height="19" stroke={K} /><rect x="6" y="8" width="5" height="9" fill={BL} stroke={BS} /><rect x="18" y="3" width="7" height="23" stroke={K} /><rect x="19" y="4" width="5" height="10" fill={GY} /></V>,
  <V key="a3"><Ax /><rect x="1" y="3" width="26" height="6" fill={BL} stroke={BS} /><rect x="1" y="9" width="14" height="5" stroke={K} /><rect x="1" y="16" width="12" height="5" fill={GY} stroke={K} /><rect x="1" y="21" width="18" height="3" stroke={K} /></V>,
  <V key="a4"><Ax /><rect x="3" y="3" width="6" height="23" fill={BL} stroke={BS} /><rect x="9" y="12" width="5" height="14" stroke={K} /><rect x="16" y="16" width="5" height="10" fill={GY} stroke={K} /><rect x="21" y="9" width="5" height="17" stroke={K} /></V>,
  <V key="a5"><Ax /><rect x="1" y="4" width="25" height="7" stroke={K} /><rect x="8" y="5" width="17" height="5" fill={BL} stroke={BS} /><rect x="1" y="15" width="25" height="7" stroke={K} /><rect x="17" y="16" width="8" height="5" fill={GY} /></V>,
  <V key="a6"><Ax /><rect x="5" y="3" width="8" height="23" stroke={K} /><rect x="6" y="4" width="6" height="15" fill={BL} stroke={BS} /><rect x="17" y="3" width="8" height="23" stroke={K} /><rect x="18" y="4" width="6" height="8" fill={GY} /></V>,

  <V key="b1"><Ax /><path d="M1 20l8-9 5 6 6-7 7 6" stroke={BS} /><path d="M1 16l8-8 5 5 6-7 7 5" stroke={K} /></V>,
  <V key="b2"><path d="M1 26V17l10-14 6 8 5-8 6 12v11z" fill={GY} stroke={K} /><path d="M1 26V17l6-7 8 16z" fill="#fafafa" /><path d="M1 26V16l6 3 6-6 7 13z" fill={BL} stroke={BS} /><path d="M1 26h27" stroke={BS} /></V>,
  <V key="b3"><Ax /><path d="M1 18l8-13 6 8 6-7 7 10v5l-7-5-6 8-6-6-8 8z" fill={BL} stroke={BS} /></V>,
  <V key="b4"><Ax /><path d="M1 3h27v14l-7-5-7 6-6-6-7 7z" fill={BL} stroke={BS} /></V>,
  <V key="b5"><Ax /><rect x="5" y="5" width="6" height="21" fill={BL} stroke={BS} /><rect x="15" y="3" width="6" height="23" fill={GY} stroke={K} /><path d="M1 25l8-8 7 5 11-13" stroke={K} strokeWidth="1.5" /></V>,
  <V key="b6"><Ax /><rect x="5" y="14" width="6" height="12" fill={BL} stroke={BS} /><rect x="11" y="2" width="6" height="24" stroke={K} /><rect x="18" y="11" width="6" height="15" fill={GY} stroke={K} /><path d="M1 25l8-8 8 5 10-13" stroke={K} strokeWidth="1.5" /></V>,

  <V key="c1"><Ax /><path d="M2 4c7 6 8 6 13 3s8 0 12-1v8c-5 0-7 3-12 3S7 13 2 10z" fill={GY} /><path d="M2 11c6 0 8 9 13 9s8-6 12-7v5c-4 1-7 7-12 7S7 18 2 16z" fill={BL} stroke={BS} /><path d="M4 19h6v3H4zM18 19h7v3h-7z" fill="#e07a26" /></V>,
  <V key="c2"><Ax /><path d="M5 26V9h5v17M10 9h5v8M15 17v9h5V5h6v21" stroke={K} /></V>,
  <V key="c3"><path d="M2 3h24v7H2z" fill={BL} stroke={BS} /><path d="M6 10h16v6H6z" fill={BL} stroke={BS} /><path d="M9 17h10v7H9z" fill={BL} stroke={BS} /></V>,
  <V key="c4"><Ax /><path d="M21 3h4v4h-4zM6 19h4v4H6z" fill={K} /><path d="M5 8h3v3H5zM12 12h3v3h-3zM19 15h4v4h-4z" fill={BL} /></V>,
  <V key="c5"><circle cx="14" cy="14" r="12.500" fill="#fafafa" stroke={K} strokeWidth="1.4" /><path d="M14 14V1.500A12.500 12.500 0 0 1 25 20z" fill={BL} stroke={BS} /></V>,
  <V key="c6"><circle cx="14" cy="14" r="10" stroke={BS} strokeWidth="5" /><path d="M14 4A10 10 0 0 0 4 14" stroke={GY} strokeWidth="5" /><circle cx="14" cy="14" r="6" stroke={BS} strokeWidth="1" /></V>,

  <V key="d1"><rect x="1" y="1" width="26" height="26" fill="#fafafa" stroke={BS} /><path d="M1 1h13v13H1zM1 14h13v13H1z" fill={BL} stroke={BS} /><path d="M14 9h13M20 9v18M14 18h13" stroke={K} /></V>,
  <V key="d2"><circle cx="14" cy="12" r="9" fill="#fafafa" stroke={K} strokeWidth="1.500" /><path d="M9 6l5 1 1 4-4 4-2-3zM16 14l4-1 0 4-3 2z" fill="#2f9a4d" /><path d="M7 25h14M14 21v4" stroke={K} strokeWidth="1.500" /></V>,
  <V key="d3"><path d="M2 5l7-2 4 3 6-3 7 5-1 9-6 4-3 5-5-3-4-4-4-7z" fill={BL} stroke={BS} /><path d="M2 12l7 0 3 3-3 6-4-3zM13 6l6-3 3 5-4 6-5-2z" fill={GY} stroke={K} /></V>,
  <V key="d4"><path d="M15 0L3 23l10-4 8 7z" fill="#1f8ad6" /><path d="M15 0l-2 19 8 7z" fill="#0a5ea8" /></V>,
  <V key="d5"><path d="M1 21a13 13 0 0 1 26 0h-7a6 6 0 0 0-12 0z" fill={BL} stroke={BS} /><path d="M1 21h7a6 6 0 0 1 3-5L7 10a13 13 0 0 0-6 11z" fill="#fafafa" stroke={K} /><path d="M17 11l-4 8" stroke={K} strokeWidth="2" /></V>,
  <V key="d6"><rect x="1" y="4" width="26" height="20" fill="#fafafa" stroke={K} strokeWidth="1.400" /><text x="14" y="17" textAnchor="middle" fontSize="11" fill={BS} fontFamily="Open Sans, sans-serif">123</text><path d="M4 20h20" stroke={K} /></V>,

  <V key="e1"><rect x="1" y="2" width="26" height="25" fill="#fafafa" stroke={K} strokeWidth="1.400" /><path d="M4 4v21" stroke={BS} strokeWidth="1.500" /><path d="M7 8h16M7 13h11M7 18h16M7 22h8" stroke={BS} strokeWidth="1.500" /></V>,
  <V key="e2"><rect x="1" y="3" width="26" height="22" fill="#fafafa" stroke={K} strokeWidth="1.400" /><path d="M4 15l4-7 4 7z" fill="#4aa564" /><path d="M16 7h8l-4 7z" fill="#e25555" /><path d="M4 19h20" stroke={K} /></V>,
  <V key="e3"><path d="M1 3h27v6H1zM1 9v17h12M27 9v7" stroke={K} strokeWidth="1.400" /><rect x="1" y="3" width="27" height="3" fill="#888" /><rect x="5" y="12" width="4" height="4" fill="#999" /><rect x="5" y="19" width="4" height="4" fill="#999" /><path d="M13 15h15l-6 7v5l-3-2v-3z" fill="#fafafa" stroke={K} strokeWidth="1.400" /></V>,
  <V key="e4"><rect x="2" y="2" width="24" height="24" fill="#fafafa" stroke={K} strokeWidth="1.400" /><rect x="2" y="2" width="24" height="5" fill="#888" /><path d="M2 11h24M2 16.500h24M2 22h24M10 7v19M18 7v19" stroke="#777" /></V>,
  <V key="e5"><rect x="1" y="1" width="26" height="26" fill="#fafafa" stroke={K} strokeWidth="1.400" /><rect x="1" y="1" width="26" height="5" fill="#888" /><path d="M18 8h8v8h-8zM10 17h8v9h-8zM18 17h8v9h-8zM2 17h8v9H2z" fill={BL} /><path d="M1 16.500h26M9.500 6v21M18 6v21" stroke="#fafafa" /></V>,
  <span key="e6" className="text-[26px] font-bold leading-[28px] text-[#2c7cc0]">R</span>,

  <span key="f1" className="text-[25px] font-bold leading-[28px] text-[#2c7cc0]">Py</span>,
  <V key="f2"><path d="M1 3v23h27" stroke={K} strokeWidth="1.400" /><path d="M1 7h17M1 15h12M1 21h9" stroke={K} /><circle cx="22" cy="6" r="3" fill={BL} stroke={BS} /><circle cx="16" cy="15" r="2" fill={GY} stroke={K} /><circle cx="12" cy="21" r="2" fill={GY} stroke={K} /></V>,
  <V key="f3"><rect x="1" y="10" width="9" height="7" fill={BL} stroke={BS} /><path d="M14 3h13v7H14zM14 11h13v6H14zM14 19h13v7H14z" fill={BL} stroke={BS} /><path d="M10 13h4M14 6v17" stroke={K} /></V>,
  <V key="f4"><path d="M1 3h26v19H12l-6 5v-5H1z" fill="#fafafa" stroke={BS} strokeWidth="1.400" /></V>,
  <V key="f5"><path d="M5 2h13l6 7v17H5zM18 2v7h6" stroke={K} strokeWidth="1.400" fill="#fafafa" /><circle cx="4" cy="9" r="3" fill={BL} stroke={BS} /><path d="M10 13h10M10 18h8" stroke={BS} strokeWidth="1.400" /></V>,
  <V key="f6"><path d="M7 2h14v9c0 4-3 7-7 7s-7-3-7-7zM7 4H2v4c0 3 3 5 5 5M21 4h5v4c0 3-3 5-5 5M14 18v5M8 27v-3h12v3z" stroke={K} strokeWidth="1.400" fill="#fafafa" /><path d="M8 3h12v3H8zM8 24h12v3H8z" fill={BL} /></V>,

  <V key="g1"><path d="M3 1h15l7 7v20H3zM18 1v7h7" stroke={K} strokeWidth="1.400" fill="#fafafa" /><path d="M7 19h3v6H7zM13 15h3v10h-3zM19 12h3v13h-3z" fill={K} /></V>,
  <V key="g2"><rect x="3" y="6" width="24" height="20" fill="#fafafa" stroke={K} strokeWidth="1.400" /><text x="16" y="20" textAnchor="middle" fontSize="11" fill={BS} fontFamily="Open Sans, sans-serif">123</text><path d="M2 0h8L7 8h5L3 18l2-7H0z" fill="#f6b33d" stroke="#cf6a10" strokeWidth="0.800" /></V>,
  <V key="g3"><path d="M13 5h7v7h-7zM21 5h7v7h-7zM3 15h7v9H3z" stroke="#999" /><path d="M12 14h16l-6 7v6l-4-2v-4z" fill="#fafafa" stroke={K} strokeWidth="1.400" /><path d="M3 0h8L8 7h4L3 14l2-7H1z" fill="#f6b33d" stroke="#cf6a10" strokeWidth="0.800" /></V>,
  <V key="g4"><path d="M1 3h26v24H1z" fill="#9dc7ef" stroke={BS} strokeWidth="1.400" /><path d="M9 3h18v8l-7 3-2 7 4 6H9l-3-8 5-5z" fill="#fafafa" /><path d="M1 0h8v9l-4 6-4-6z" fill="#d9691a" /><circle cx="23" cy="23" r="4" fill="#d9691a" /><circle cx="25" cy="15" r="2" fill="#d9691a" /></V>,
  <V key="g5"><path d="M14 1L2 14l8 9 4-4-4-5 4-5 5 5 5-4z" stroke="#8a3fa8" strokeWidth="1.300" /><path d="M14 19l5-5 7 0-10 13-6-4" stroke="#8a3fa8" strokeWidth="1.300" /></V>,
  <V key="g6"><path d="M1 4h16l10 10-10 10H1l10-10z" stroke={BS} strokeWidth="1.400" /><path d="M7 4l10 10-10 10M11 14h16" stroke={BS} strokeWidth="1.400" /></V>,
];

function Visualizations() {
  return (
    <div className="flex w-[270px] shrink-0 flex-col bg-[#f3f2f1]">
      <div className="flex h-[52px] items-center pl-[12px] pr-[12px] pt-[8px]">
        <span className="text-[23.500px] font-medium text-[#333]">Visualizations</span>
        <span className="ml-auto">
          <DoubleChevron />
        </span>
      </div>
      <div className="pl-[12px] pt-[4px] text-[17.400px] leading-[24px] text-[#333]">Build visual</div>
      <div className="relative mt-[8px] flex h-[66px] items-start border-b border-[#8f8f8f]">
        <div className="ml-[12px] flex h-[48px] w-[48px] items-center justify-center rounded-[3px] bg-[#d2d2d2]">
          <svg width="38" height="36" viewBox="0 0 38 36">
            <path d="M3 1h28" stroke="#333" />
            <rect x="2" y="7" width="34" height="10" fill="#117865" stroke="#222" strokeDasharray="1.500 1.500" />
            <rect x="2" y="24" width="34" height="10" fill="#117865" stroke="#222" strokeDasharray="1.500 1.500" />
          </svg>
        </div>
        <svg width="36" height="36" viewBox="0 0 36 36" fill="none" stroke="#333" strokeWidth="1.300" className="ml-[56px] mt-[6px]">
          <path d="M3 28V16h7V3h11v14M3 28h11" />
          <path d="M33 13L19 27c-2 2-3 5-7 7 5 1 9 0 11-3l11-15z" />
        </svg>
        <svg width="38" height="38" viewBox="0 0 38 38" fill="none" stroke="#333" strokeWidth="1.400" className="ml-[62px] mt-[5px]">
          <circle cx="17" cy="17" r="15" />
          <path d="M3 20l7-6 7 5 6-8 9 7M9 19v11M15 22v9M21 20v11" />
          <path d="M28 28l8 8" strokeWidth="3" />
        </svg>
        <svg width="26" height="13" viewBox="0 0 26 13" className="absolute -bottom-[1px] left-[24px]" fill="#f3f2f1" stroke="#8f8f8f">
          <path d="M0 12h1L13 1l12 11h1" />
        </svg>
      </div>
      <div className="grid h-[351px] grid-cols-[repeat(6,42px)] content-start border-b border-[#dedcda] pl-[9px] pt-[9px]" style={{ gridAutoRows: "42.2px" }}>
        {vizIcons.map((ic, i) => (
          <div key={i} className={`flex items-center justify-center ${i === 27 ? "mx-[1px] my-[2px] border border-[#222]" : ""}`}>
            {ic}
          </div>
        ))}
        <div className="flex items-center justify-center gap-[5px]">
          <span className="h-[2.500px] w-[2.500px] rounded-full bg-[#333]" />
          <span className="h-[2.500px] w-[2.500px] rounded-full bg-[#333]" />
          <span className="h-[2.500px] w-[2.500px] rounded-full bg-[#333]" />
        </div>
      </div>
      <div className="relative flex-1 pl-[17px] text-[17px] text-[#333]">
        <span className="absolute right-0 top-[4px] h-[165px] w-[9px] rounded-full bg-[#8a8a8a]" />
        <div className="pt-[14px] leading-[24px]">Columns</div>
        <div className="-ml-[11px] mt-[6px] h-[52px] w-[254px] border border-dashed border-[#d0d0d0] bg-white px-[3px] pt-[4px]">
          <div className="flex h-[33px] items-center rounded-[2px] border border-[#c8c8c8] bg-[#eeeeee] pl-[6px] pr-[1px]">
            Year
            <span className="ml-auto">
              <Chev w={17} c="#333" />
            </span>
            <X size={22} strokeWidth={1} className="ml-[1px]" />
          </div>
        </div>
        <div className="mt-[17px] font-bold leading-[24px] text-[#444]">Drill through</div>
        <div className="mt-[14px] flex w-[221px] items-center justify-between leading-[24px]">
          Cross-report
          <div className="flex h-[24px] w-[48px] items-center gap-[2px] rounded-full border border-[#777] bg-white pl-[6px] text-[13.500px] text-[#666]">
            <span className="h-[11px] w-[11px] rounded-full bg-[#666]" />
            Off
          </div>
        </div>
        <div className="mt-[16px] flex w-[221px] items-center justify-between leading-[24px]">
          Keep all filters
          <div className="flex h-[24px] w-[48px] items-center gap-[3px] rounded-full bg-[#117865] pl-[6px] text-[13.500px] text-white">
            On
            <span className="h-[11px] w-[11px] rounded-full bg-white" />
          </div>
        </div>
      </div>
    </div>
  );
}

function DataPanel() {
  const fields: [string, "s" | "d" | ""][] = [
    ["Sales", "s"], ["COGS", "s"], ["Country", ""], ["Date", "d"], ["Discount Band", ""], ["Discounts", "s"], ["Gross Sales", "s"], ["Manufacturin...", "s"],
    ["Month Name", ""], ["Month Number", "s"], ["Product", ""], ["Profit", "s"], ["Sale Price", "s"], ["Segment", ""], ["Units Sold", "s"], ["Year", "s"],
  ];
  return (
    <div className="relative flex w-[271px] shrink-0 flex-col border-l border-[#e1dfdd] bg-[#f3f2f1]">
      <div className="flex h-[52px] items-center pl-[13px] pr-[12px] pt-[6px]">
        <span className="text-[23px] font-semibold text-[#333]">Data</span>
        <span className="ml-auto">
          <DoubleChevron />
        </span>
      </div>
      <div className="ml-[7px] mt-[16px] flex h-[36px] w-[257px] items-center rounded-[4px] border border-[#bdbdbd] border-b-[#777] bg-white pl-[16px] text-[19px] text-[#666]">
        <Search size={24} strokeWidth={1.200} className="text-[#555]" />
        <span className="ml-[9px]">Search</span>
      </div>
      <span className="absolute right-[6px] top-[116px] h-[593px] w-[12px] bg-[#8a8a8a]" />
      <div className="mt-[14px] text-[17px] text-[#333]">
        <div className="relative flex h-[37px] items-center pl-[20px]">
          <Chev w={17} c="#333" />
          <svg width="20" height="20" viewBox="0 0 20 20" fill="none" stroke="#333" strokeWidth="1.300" className="ml-[7px]">
            <rect x="1" y="1" width="18" height="17" rx="2" />
            <path d="M1 7h18M1 12.500h18M7 1v17M13 1v17" />
          </svg>
          <span className="absolute left-[53px] top-[19px] flex h-[17px] w-[17px] items-center justify-center rounded-full bg-[#117865]">
            <Check size={11} strokeWidth={4} className="text-white" />
          </span>
          <span className="ml-[7px]">Sheet1</span>
        </div>
        {fields.map(([name, kind]) => (
          <div key={name} className="flex h-[35.900px] items-center whitespace-nowrap">
            <span className="flex w-[66px] justify-end pr-[9px]">
              {name === "Date" && (
                <svg width="10" height="18" viewBox="0 0 10 18" fill="none" stroke="#333" strokeWidth="1.100">
                  <path d="M1 1l8 8-8 8" />
                </svg>
              )}
            </span>
            {name === "Year" ? (
              <span className="flex h-[18px] w-[18px] items-center justify-center rounded-[2px] bg-[#117865]">
                <Check size={14} strokeWidth={2} className="text-white" />
              </span>
            ) : (
              <span className="h-[18px] w-[18px] rounded-[3px] border border-[#8f8f8f]" />
            )}
            <span className="flex w-[39px] justify-center">
              {kind === "s" && (
                <svg width="16" height="18" viewBox="0 0 16 18" fill="none" stroke="#333" strokeWidth="1.300">
                  <path d="M15 1H2l7 8-7 8h13" />
                </svg>
              )}
              {kind === "d" && (
                <svg width="18" height="18" viewBox="0 0 18 18" fill="none" stroke="#333" strokeWidth="1.300">
                  <rect x="1" y="2" width="16" height="15" rx="2" />
                  <path d="M1 6h16M5 9h2M9 9h2M13 9h0M5 12.500h2M9 12.500h2" />
                </svg>
              )}
            </span>
            {name}
          </div>
        ))}
      </div>
    </div>
  );
}

function StatusBar() {
  return (
    <div className="flex h-[36px] items-center border-t border-[#dedcda] border-b-[2px] border-b-[#111] bg-[#f3f2f1] pl-[6px] pr-[7px] pt-[1px] text-[17.500px] text-[#555]">
      Page 1 of 1
      <div className="ml-auto flex items-center">
        <Minus size={12} strokeWidth={1.800} className="text-[#444]" />
        <div className="relative ml-[7px] h-[1px] w-[148px] bg-[#777]">
          <span className="absolute left-[37px] -top-[7px] h-[14px] w-[4px] bg-[#666]" />
          <span className="absolute left-[73px] -top-[3px] h-[7px] w-[1px] bg-[#666]" />
        </div>
        <Plus size={14} strokeWidth={2} className="ml-[8px] text-[#444]" />
        <span className="ml-[19px] text-[16.500px]">60%</span>
        <svg width="23" height="20" viewBox="0 0 23 20" fill="none" stroke="#555" strokeWidth="1.300" className="ml-[30px]">
          <rect x="1" y="1" width="21" height="18" />
          <path d="M4 8V4h4M19 8V4h-4M4 12v4h4M19 12v4h-4" strokeWidth="1.600" />
        </svg>
        <span className="ml-[21px] text-[17.200px]">Update available (click to download)</span>
      </div>
    </div>
  );
}

function TaskIcon({ children, active }: { children: ReactNode; active?: boolean }) {
  return (
    <div className={`flex h-[58px] w-[66px] flex-col items-center justify-center rounded-[4px] ${active ? "bg-[#fafafa]" : ""}`}>
      <div className="flex h-[38px] items-center">{children}</div>
      <span className={`mt-[5px] h-[4px] rounded-full ${active ? "w-[22px] bg-[#0067c0]" : "w-[4px] bg-[#7a7a7a]"}`} />
    </div>
  );
}

function Taskbar() {
  return (
    <div className="flex flex-1 items-center bg-[#eeeeee] pl-[541px] text-[#222]">
      <svg width="36" height="36" viewBox="0 0 36 36">
        <defs>
          <linearGradient id="win" x1="0" y1="0" x2="1" y2="1">
            <stop offset="0" stopColor="#2bb4f4" />
            <stop offset="1" stopColor="#0b72d0" />
          </linearGradient>
        </defs>
        <path d="M0 2h17v15H0zM19 2h17v15H19zM0 19h17v15H0zM19 19h17v15H19z" fill="url(#win)" />
      </svg>
      <div className="ml-[22px] flex h-[47px] w-[326px] items-center rounded-full bg-white pl-[15px] pr-[28px] shadow-[0_1px_2px_rgba(0,0,0,0.2)]">
        <Search size={24} strokeWidth={2} className="text-[#222]" />
        <span className="ml-[16px] text-[18px] text-[#555]">Search</span>
        <svg width="40" height="32" viewBox="0 0 40 32" className="ml-auto">
          <rect x="3" y="3" width="26" height="19" fill="#4d8ed0" stroke="#555" />
          <path d="M0 23h32l3 7H3z" fill="#8c8c9a" />
          <rect x="32" y="10" width="7" height="17" rx="1" fill="#d13c3c" />
          <path d="M33 2v9M35 4v7M37 3v8" stroke="#5a9a3e" strokeWidth="1.300" />
        </svg>
      </div>
      <div className="ml-[6px] flex items-center">
        <TaskIcon>
          <svg width="36" height="34" viewBox="0 0 36 34">
            <path d="M1 3h13l3 3h18v26H1z" fill="#f6c22f" />
            <rect x="1" y="7" width="34" height="25" fill="#fbd35b" />
            <rect x="7" y="21" width="22" height="11" fill="#0a6ecb" />
            <rect x="14" y="19" width="8" height="4" fill="#0a6ecb" />
          </svg>
        </TaskIcon>
        <TaskIcon>
          <CopilotMark id="cpT" />
        </TaskIcon>
        <TaskIcon>
          <svg width="36" height="36" viewBox="0 0 36 36">
            <defs>
              <linearGradient id="edg" x1="0" y1="0" x2="1" y2="1">
                <stop offset="0" stopColor="#35c1b5" />
                <stop offset="0.6" stopColor="#1a86d0" />
                <stop offset="1" stopColor="#0c4fa0" />
              </linearGradient>
            </defs>
            <circle cx="18" cy="18" r="17" fill="url(#edg)" />
            <path d="M35 20c0-7-6-10-11-10-7 0-12 4-12 11 0 7 6 12 14 11 4-1 6-2 8-5-6 3-12 1-13-4h14z" fill="#eeeeee" />
            <path d="M25 15c-3-2-7-1-8 3h12c0-2-2-3-4-3z" fill="#2ac2a8" />
          </svg>
        </TaskIcon>
        <TaskIcon>
          <svg width="36" height="36" viewBox="0 0 36 36">
            <path d="M18 18L3 9a17 17 0 0 1 30 0z" fill="#e0413a" />
            <path d="M18 18L3 9a17 17 0 0 0 14 26z" fill="#2d9a4b" />
            <path d="M18 18h17a17 17 0 0 1-18 17z" fill="#f6c22f" />
            <path d="M18 9h15l2 9H18z" fill="#f6c22f" />
            <circle cx="18" cy="18" r="8" fill="#fff" />
            <circle cx="18" cy="18" r="6" fill="#3f8ae8" />
          </svg>
        </TaskIcon>
        <TaskIcon active>
          <svg width="30" height="36" viewBox="0 0 30 36">
            <rect x="1" y="17" width="9" height="18" fill="#f3dc7e" />
            <rect x="10" y="9" width="9" height="26" fill="#f2c335" />
            <rect x="19" y="1" width="10" height="34" fill="#d99a12" />
          </svg>
        </TaskIcon>
        <TaskIcon>
          <svg width="36" height="36" viewBox="0 0 36 36" fill="none">
            <circle cx="18" cy="18" r="17.500" fill="#1ed760" />
            <path d="M8 13c7-2 14-1 20 2M9 19c6-2 12-1 17 2M10 25c5-1 10-1 14 2" stroke="#121212" strokeWidth="3" strokeLinecap="round" />
          </svg>
        </TaskIcon>
        <TaskIcon>
          <svg width="32" height="36" viewBox="0 0 32 36">
            <rect width="32" height="36" rx="4" fill="#2a78cf" />
            <circle cx="23" cy="8" r="3.500" fill="#fff" />
            <path d="M1 30l15-20 15 20v2a3 3 0 0 1-3 3H4a3 3 0 0 1-3-3z" fill="#7fcaf0" />
          </svg>
        </TaskIcon>
      </div>
      <ChevronUp size={20} strokeWidth={1.800} className="ml-[125px]" />
      <Cloud size={22} strokeWidth={1.400} fill="#bdbdbd" className="ml-[27px]" />
      <div className="ml-[28px] flex flex-col items-center text-[16.500px] leading-[23px]">
        <span>ENG</span>
        <span>IN</span>
      </div>
      <Wifi size={24} strokeWidth={1.600} className="ml-[27px]" />
      <Volume2 size={22} strokeWidth={1.500} className="ml-[12px]" />
      <BatteryCharging size={24} strokeWidth={1.600} className="ml-[14px]" />
      <div className="ml-auto flex flex-col items-end pr-[29px] text-[17.500px] leading-[24px]">
        <span>14:52</span>
        <span>25-09-2025</span>
      </div>
    </div>
  );
}

export default function App() {
  return (
    <div className="relative flex h-[1080px] w-[1920px] flex-col overflow-hidden bg-white font-['Open_Sans','Noto_Sans',sans-serif]">
      <TitleBar />
      <Ribbon />
      <div className="flex h-[732px]">
        <LeftRail />
        <div className="flex w-[1269px] shrink-0 flex-col">
          <div className="h-[679px] bg-white pl-[55px] pt-[12px]">
            <Report />
          </div>
          <PageTabs />
        </div>
        <div className="flex w-[49px] shrink-0 flex-col items-center border-l border-[#e1dfdd] bg-white pt-[18px] text-[#222]">
          <DoubleChevron left />
          <svg width="20" height="20" viewBox="0 0 20 20" fill="none" stroke="#222" strokeWidth="1.400" className="mt-[23px]">
            <path d="M18 2v16l-6-7H2z" />
          </svg>
          <span className="mt-[12px] text-[21px] font-semibold [writing-mode:vertical-rl]">Filters</span>
        </div>
        <Visualizations />
        <DataPanel />
      </div>
      <StatusBar />
      <Taskbar />
    </div>
  );
}
